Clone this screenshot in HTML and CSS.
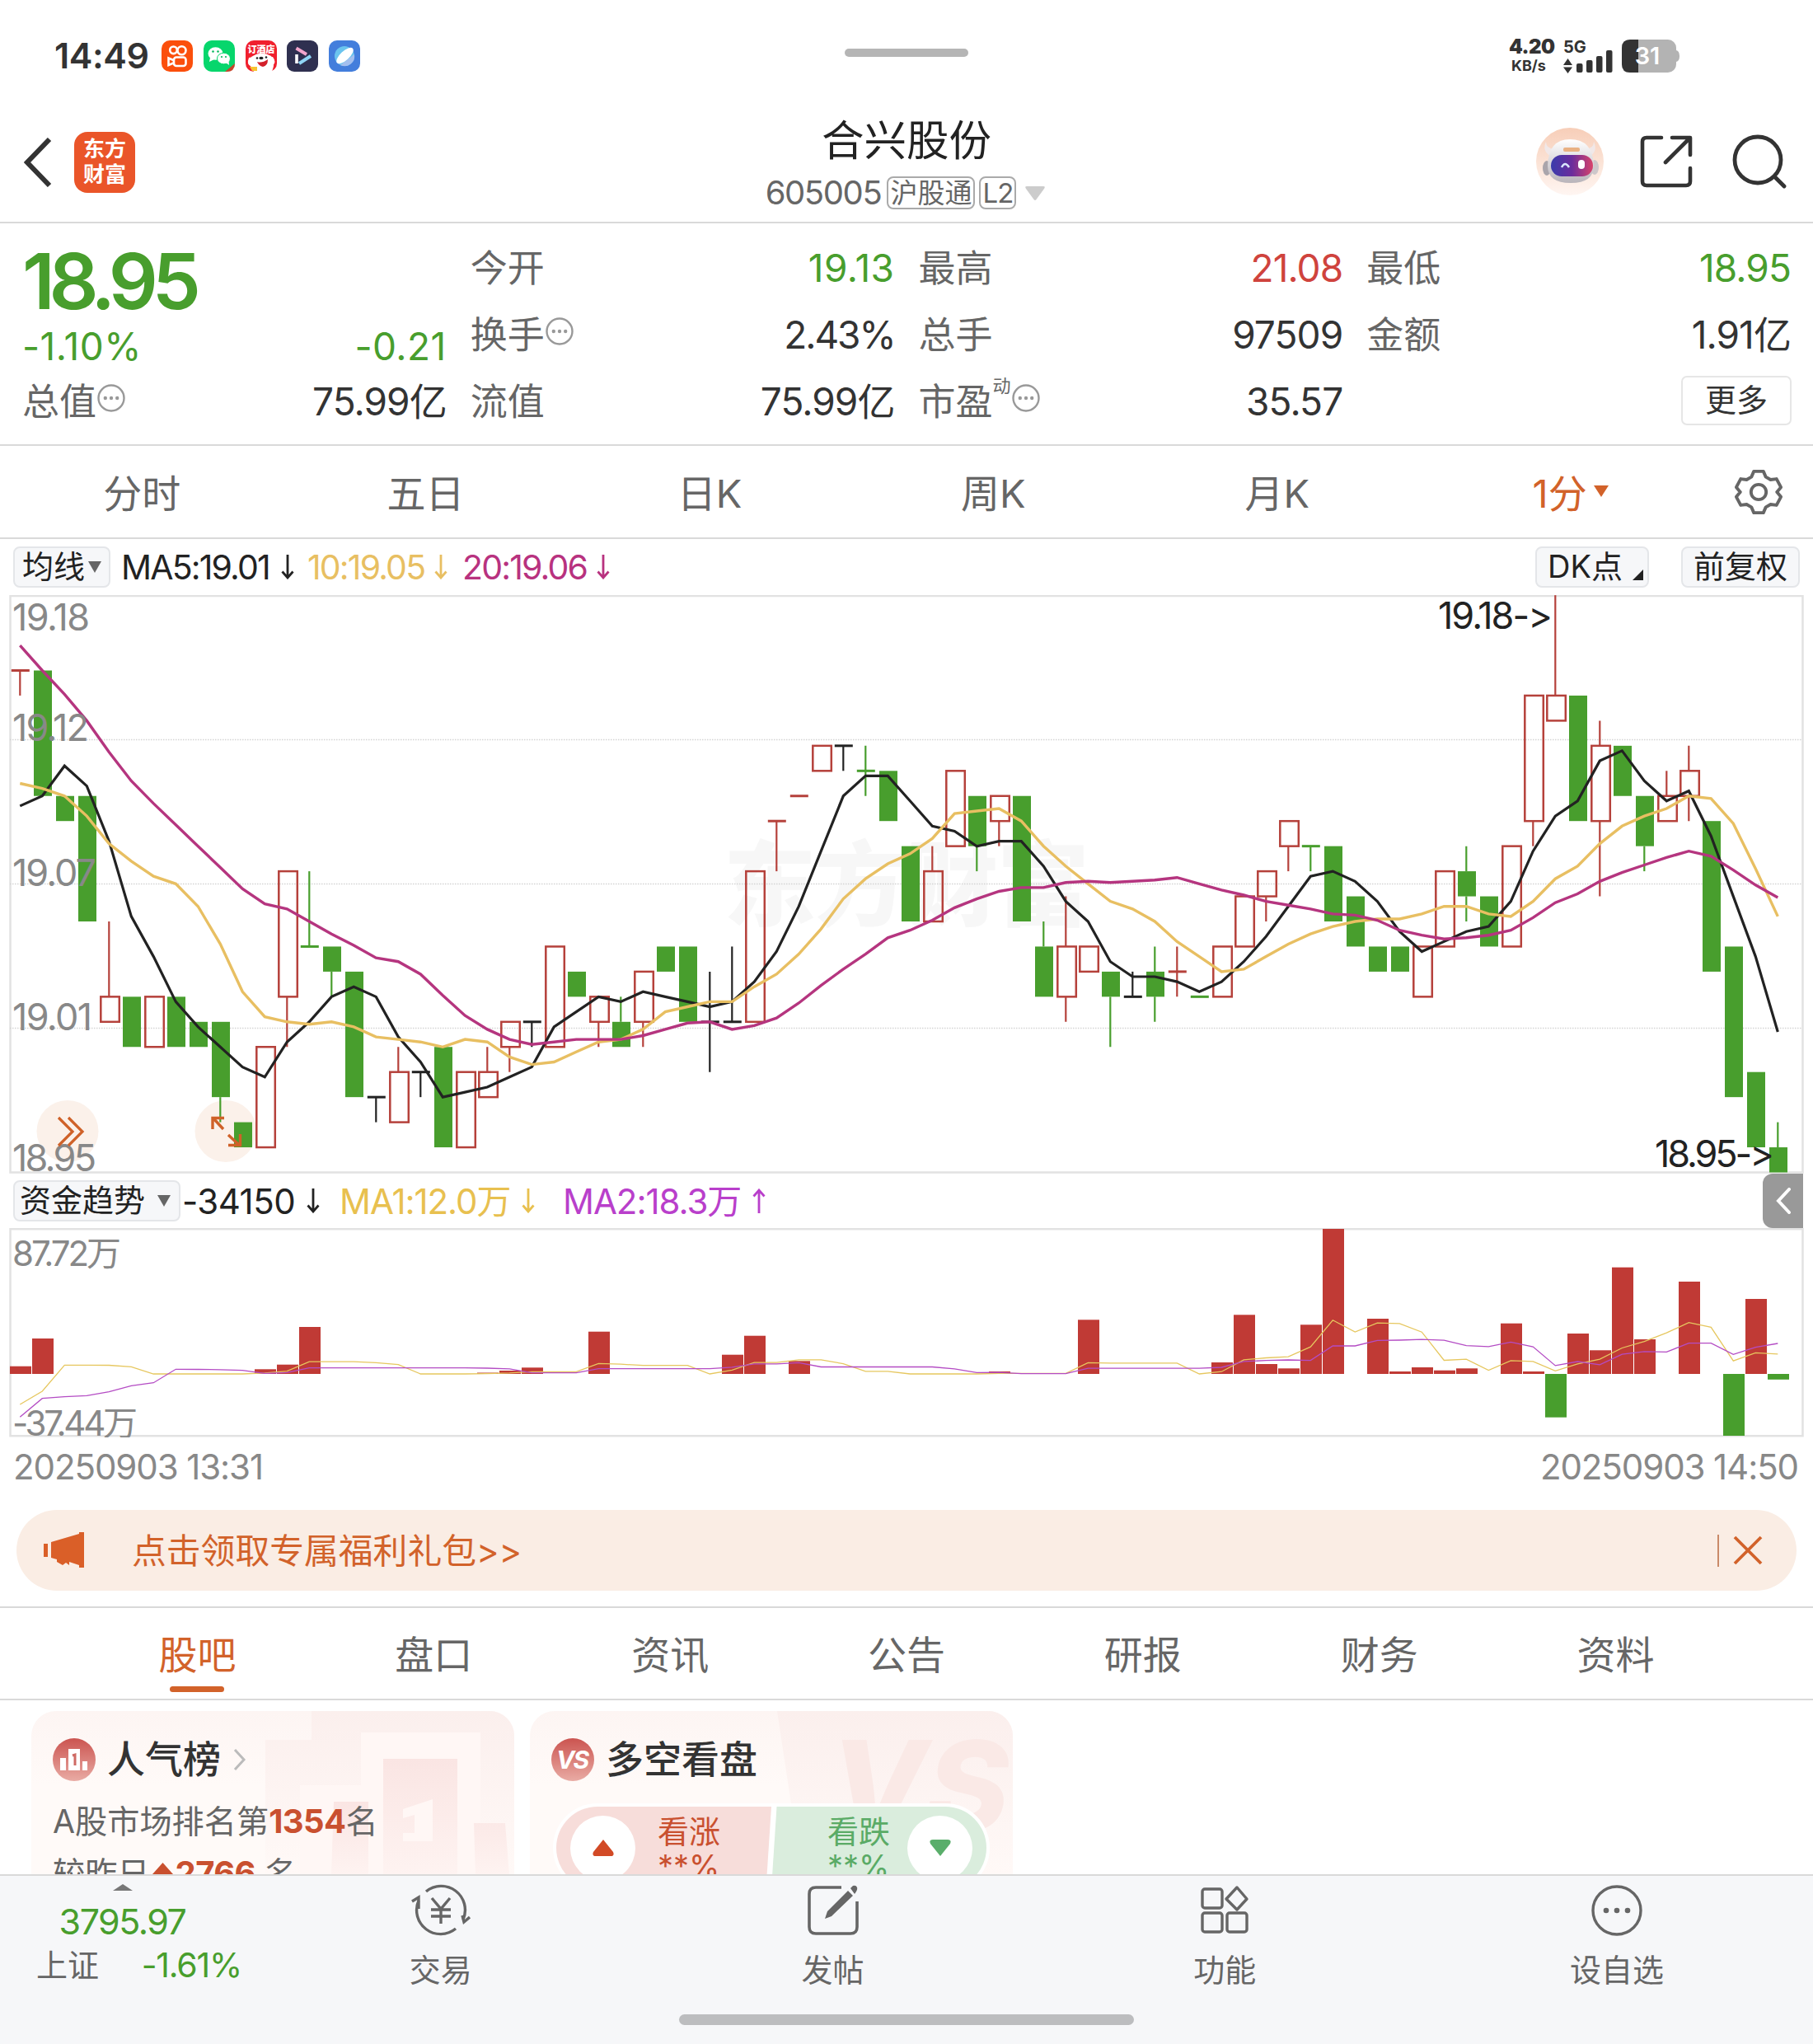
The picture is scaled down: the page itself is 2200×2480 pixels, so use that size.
FILE: index.html
```
<!DOCTYPE html>
<html lang="zh-CN">
<head>
    <meta charset="UTF-8">
    <meta name="viewport" content="width=device-width, initial-scale=1.0">
    <title>合兴股份 605005</title>
    <link rel="stylesheet" href="styles.css">
</head>
<body>

<!-- arrows used by the indicator legends -->
<svg class="defs" width="0" height="0">
    <symbol id="arrow-down" viewBox="0 0 16 30"><path d="M8 0V28M1.5 20.5L8 28L14.500 20.500" fill="none" stroke="currentColor" stroke-width="2.800"/></symbol>
    <symbol id="arrow-up" viewBox="0 0 16 30"><path d="M8 30V2M1.5 9.500L8 2L14.500 9.500" fill="none" stroke="currentColor" stroke-width="2.800"/></symbol>
    <symbol id="dots" viewBox="0 0 34 34"><circle cx="17" cy="17" r="15.500" fill="none" stroke="#999" stroke-width="2.400"/><circle cx="9.800" cy="17" r="2.200" fill="#999"/><circle cx="17" cy="17" r="2.200" fill="#999"/><circle cx="24.200" cy="17" r="2.200" fill="#999"/></symbol>
</svg>

<div class="status-bar">
    <span class="clock">14:49</span>
    <div class="app-icons">
        <svg viewBox="0 0 38 38"><rect width="38" height="38" rx="10" fill="#fb4f0c"/><g fill="none" stroke="#fff" stroke-width="2.600"><circle cx="14.500" cy="11.800" r="4.300"/><circle cx="24.500" cy="12.200" r="5"/><rect x="15" y="20.500" width="14.500" height="10.500" rx="3"/><path d="M14.500 24L8.500 21.500V30L14.500 27.500"/></g></svg>
        <svg viewBox="0 0 38 38"><rect width="38" height="38" rx="10" fill="#07d66c"/><path d="M38 28V28Q38 38 28 38H26Z" fill="#c8432b"/><ellipse cx="14.500" cy="16" rx="9" ry="7.800" fill="#fff"/><path d="M8 21L7 26L13 23Z" fill="#fff"/><ellipse cx="24.500" cy="22" rx="8" ry="6.800" fill="#fff" stroke="#07d66c"/><path d="M27 27L31 30L30.500 25Z" fill="#fff"/><g fill="#07b85c"><circle cx="11.500" cy="13.500" r="1.300"/><circle cx="17.500" cy="13.500" r="1.300"/><circle cx="22" cy="20" r="1.100"/><circle cx="27" cy="20" r="1.100"/></g></svg>
        <svg viewBox="0 0 38 38"><rect width="38" height="38" rx="10" fill="#f0202e"/><path d="M10 38Q2 28 7 20Q19 12 31 19Q37 26 32 38Z" fill="#fff"/><path d="M4 21Q1 29 6 31L10 20ZM33 20Q38 27 33 30L29 20Z" fill="#fff"/><circle cx="14" cy="21.500" r="1.300" fill="#222"/><circle cx="25" cy="20.500" r="1.300" fill="#222"/><ellipse cx="19" cy="21.500" rx="2.600" ry="1.700" fill="#222"/><path d="M14 26Q20 28 27 23Q27 31 21 32Q16 31 14 26Z" fill="#d3202a"/><path d="M5 32H14V37H8Z" fill="#f8c330"/><text x="19" y="15" text-anchor="middle" class="mini-ad">订酒店</text></svg>
        <svg viewBox="0 0 38 38"><rect width="38" height="38" rx="9" fill="#2f3050"/><path d="M12 17V28" stroke="#fff" stroke-width="3.600"/><path d="M11.500 9.500L24 17" stroke="#f3a5cc" stroke-width="4"/><path d="M29 19L15 28" stroke="#8fd5f5" stroke-width="4"/></svg>
        <svg viewBox="0 0 38 38"><rect width="38" height="38" rx="10" fill="#437edc"/><circle cx="19" cy="19" r="12" fill="#6bc4ee"/><path d="M31 17A12 12 0 0 1 14 30Z" fill="#a3bfee"/><ellipse cx="19.500" cy="18.500" rx="5.500" ry="13" transform="rotate(47 19.500 18.500)" fill="#fff"/></svg>
    </div>
    <div class="drag-handle"></div>
    <div class="status-right">
        <div class="net-speed"><b>4.20</b><small>KB/s</small></div>
        <svg class="signal" viewBox="0 0 62 42">
            <text x="0" y="17" class="signal-type">5G</text>
            <path d="M0 32L5.500 24L11 32ZM0 34.500L5.500 42L11 34.500Z" fill="#333"/>
            <g fill="#333"><rect x="16" y="30" width="7.500" height="11" rx="2"/><rect x="28" y="26" width="7.500" height="15" rx="2"/><rect x="40" y="21" width="7.500" height="20" rx="2"/><rect x="52" y="14" width="7.500" height="27" rx="2"/></g>
        </svg>
        <svg class="battery" viewBox="0 0 70 40">
            <rect x="0" y="0" width="66" height="40" rx="10" fill="#b3b3b3"/><path d="M66 13Q70 14 70 20T66 27Z" fill="#b3b3b3"/>
            <path d="M20 0H10Q0 0 0 10V30Q0 40 10 40H20Z" fill="#333"/>
            <text x="31" y="30" text-anchor="middle" class="battery-text">31</text>
        </svg>
    </div>
</div>

<header class="title-bar">
    <div class="title-left">
        <svg class="back" viewBox="0 0 34 60"><path d="M31 2L4 30L31 58" fill="none" stroke="#333" stroke-width="6"/></svg>
        <div class="logo">东方<br>财富</div>
    </div>
    <div class="title-center">
        <h1>合兴股份</h1>
        <div class="stock-code"><span class="num">605005</span><span class="tag">沪股通</span><span class="tag tag-l2">L2</span><svg viewBox="0 0 24 17"><path d="M2 0H22Q25 0 23 3L13.500 16Q12 18 10.500 16L1 3Q-1 0 2 0Z" fill="#ccc"/></svg></div>
    </div>
    <div class="title-right">
        <svg class="robot" viewBox="0 0 82 82">
            <defs>
                <linearGradient id="robotBg" x1="0" y1="0" x2="0" y2="1"><stop offset="0" stop-color="#f7ceb8"/><stop offset="1" stop-color="#fff6f2"/></linearGradient>
                <linearGradient id="visor"><stop offset="0" stop-color="#3a3cac"/><stop offset=".5" stop-color="#6b2d9c"/><stop offset="1" stop-color="#d8436a"/></linearGradient>
                <linearGradient id="shell" x1="0" y1="0" x2="0" y2="1"><stop offset="0" stop-color="#fff"/><stop offset="1" stop-color="#b9b4ba"/></linearGradient>
            </defs>
            <circle cx="41" cy="41" r="41" fill="url(#robotBg)"/>
            <path d="M12 17Q7 28 17 34L22 26Q12 25 12 17ZM70 17Q75 28 66 34L60 26Q70 25 70 17Z" fill="#f1e8e8"/>
            <ellipse cx="13" cy="49" rx="5" ry="9" fill="#aaa5ab"/><ellipse cx="71" cy="48" rx="5" ry="9" fill="#cdc7ca"/>
            <path d="M14 46Q15 14 41 14Q69 14 70 46Q70 67 42 67Q14 67 14 46Z" fill="url(#shell)"/>
            <rect x="33" y="24" width="20" height="5" rx="2" fill="#e9b183"/>
            <rect x="18" y="33" width="51" height="26" rx="13" fill="url(#visor)"/>
            <path d="M31 48Q35 40 40 48" fill="none" stroke="#d9e6ff" stroke-width="2.500"/><rect x="51" y="39" width="8" height="11" rx="4" fill="#fff"/>
        </svg>
        <svg class="share" viewBox="0 0 64 64"><path d="M26 3H8Q3 3 3 8V56Q3 61 8 61H56Q61 61 61 56V40M39 3H61V24M60 4L31 33" fill="none" stroke="#333" stroke-width="4.600" stroke-linecap="round" stroke-linejoin="round"/></svg>
        <svg class="search" viewBox="0 0 66 66"><circle cx="31" cy="31" r="28" fill="none" stroke="#333" stroke-width="4.800"/><path d="M51 51L63 63" stroke="#333" stroke-width="4.800" stroke-linecap="round"/></svg>
    </div>
</header>

<section class="quote">
    <div class="quote-col main-col">
        <div class="price">18.95</div>
        <div class="cell change green"><span class="num wide">-1.10%</span><span class="num wide">-0.21</span></div>
        <div class="cell"><label>总值<svg><use href="#dots"/></svg></label><span class="num">75.99亿</span></div>
    </div>
    <div class="quote-col">
        <div class="cell"><label>今开</label><span class="num wide green">19.13</span></div>
        <div class="cell"><label>换手<svg><use href="#dots"/></svg></label><span class="num tight">2.43%</span></div>
        <div class="cell"><label>流值</label><span class="num">75.99亿</span></div>
    </div>
    <div class="quote-col">
        <div class="cell"><label>最高</label><span class="num red">21.08</span></div>
        <div class="cell"><label>总手</label><span class="num">97509</span></div>
        <div class="cell"><label>市盈<sup>动</sup><svg><use href="#dots"/></svg></label><span class="num">35.57</span></div>
    </div>
    <div class="quote-col">
        <div class="cell"><label>最低</label><span class="num green">18.95</span></div>
        <div class="cell"><label>金额</label><span class="num">1.91亿</span></div>
        <div class="cell cell-more"><span class="more">更多</span></div>
    </div>
</section>

<nav class="period-tabs">
    <span>分时</span>
    <span>五日</span>
    <span>日K</span>
    <span>周K</span>
    <span>月K</span>
    <span class="active">1分<svg viewBox="0 0 18 14"><path d="M0 0H18L9 14Z" fill="currentColor"/></svg></span>
    <svg class="gear" viewBox="0 0 60 60"><g fill="none" stroke="#666" stroke-width="4" stroke-linejoin="round"><path d="M24 4H36L39 11L45 14.500L52.500 13.500L58 24L53 30L58 36L52.500 46.500L45 45.500L39 49L36 56H24L21 49L15 45.500L7.500 46.500L2 36L7 30L2 24L7.500 13.500L15 14.500L21 11Z"/><circle cx="30" cy="30" r="9.500"/></g></svg>
</nav>

<section class="legend">
    <span class="btn btn-ma">均线<svg viewBox="0 0 16 14"><path d="M0 0H16L8 14Z" fill="#666"/></svg></span>
    <span class="ma ma5"><i>MA5:19.01</i><svg><use href="#arrow-down"/></svg></span>
    <span class="ma ma10"><i>10:19.05</i><svg><use href="#arrow-down"/></svg></span>
    <span class="ma ma20"><i>20:19.06</i><svg><use href="#arrow-down"/></svg></span>
    <span class="btn btn-dk">DK点<svg viewBox="0 0 13 13"><path d="M13 0V13H0Z" fill="#222"/></svg></span>
    <span class="btn btn-fq">前复权</span>
</section>

<svg id="price-chart" class="chart" viewBox="0 0 2200 702" width="2200" height="702"></svg>

<section class="legend legend-flow">
    <span class="btn btn-flow">资金趋势<svg viewBox="0 0 16 14"><path d="M0 0H16L8 14Z" fill="#666"/></svg></span>
    <span class="ma flow-now"><i>-34150</i><svg><use href="#arrow-down"/></svg></span>
    <span class="ma flow-ma1"><i>MA1:12.0万</i><svg><use href="#arrow-down"/></svg></span>
    <span class="ma flow-ma2"><i>MA2:18.3万</i><svg><use href="#arrow-up"/></svg></span>
    <span class="side-toggle"><svg viewBox="0 0 18 32"><path d="M16 2L3 16L16 30" fill="none" stroke="#fff" stroke-width="4" stroke-linecap="round"/></svg></span>
</section>

<svg id="flow-chart" class="chart" viewBox="0 0 2200 254" width="2200" height="254"></svg>

<div class="dates"><span>20250903 13:31</span><span>20250903 14:50</span></div>

<div class="banner">
    <svg class="horn" viewBox="0 0 50 44"><path d="M0 14H5V30H0ZM9 12L43 2V0H49V43H43V40L31 36V40L27 37L23 40L16 36V33L9 31Z" fill="#da5f28"/></svg>
    <span class="banner-text">点击领取专属福利礼包&gt;&gt;</span>
    <span class="banner-line"></span>
    <svg class="banner-close" viewBox="0 0 36 36"><path d="M2 2L34 34M34 2L2 34" stroke="#d2622a" stroke-width="3.800"/></svg>
</div>

<nav class="info-tabs">
    <span class="active">股吧</span>
    <span>盘口</span>
    <span>资讯</span>
    <span>公告</span>
    <span>研报</span>
    <span>财务</span>
    <span>资料</span>
</nav>

<section class="cards">
    <div class="card">
        <svg class="card-art" viewBox="0 0 586 199">
            <defs>
                <linearGradient id="fade" x1="0" y1="0" x2="0" y2="1"><stop offset="0" stop-color="#fbefed"/><stop offset="1" stop-color="#fff9f7"/></linearGradient>
                <linearGradient id="bar" x1="0" y1="0" x2="0" y2="1"><stop offset="0" stop-color="#fae5e3"/><stop offset="1" stop-color="#fef3f1"/></linearGradient>
            </defs>
            <path d="M340 0H586V199H284V35H340Z" fill="url(#fade)"/>
            <path d="M400 26H545V199H326V90H400Z" fill="#fff7f5"/>
            <path d="M427 58H517V199H427Z" fill="url(#bar)"/>
            <path d="M367 110H409V199H364ZM537 136H575L580 199H539Z" fill="url(#bar)"/>
            <path d="M451 119L487 107V158H451V148H465V126L451 130Z" fill="#fff7f5"/>
        </svg>
        <div class="card-title">
            <svg class="badge" viewBox="0 0 52 52"><defs><linearGradient id="badge" x1="0" y1="0" x2="0" y2="1"><stop offset="0" stop-color="#cb5450"/><stop offset="1" stop-color="#e9aba4"/></linearGradient></defs><circle cx="26" cy="26" r="26" fill="url(#badge)"/><path d="M9 24H16V39H9ZM19 13H33V39H19ZM36 28H42V39H36Z" fill="#fff"/><path d="M24 21L27 20V33" fill="none" stroke="#cf6a64" stroke-width="3"/></svg>
            <h2>人气榜</h2>
            <svg class="chevron" viewBox="0 0 16 26"><path d="M2 1L13 13L2 25" fill="none" stroke="#bbb" stroke-width="3"/></svg>
        </div>
        <p>A股市场排名第<b>1354</b>名</p>
        <p>较昨日<svg class="up" viewBox="0 0 25 20"><path d="M12.500 0L25 14V16Q25 20 19 20H6Q0 20 0 16V14Z" fill="#c9502f"/></svg><b>2766</b> 名</p>
    </div>
    <div class="card">
        <svg class="card-art" viewBox="0 0 586 199">
            <path d="M300 0H586V199H330Z" fill="url(#fade)"/>
            <text x="364" y="146" class="art-vs">VS</text>
        </svg>
        <div class="card-title">
            <svg class="badge" viewBox="0 0 52 52"><circle cx="26" cy="26" r="26" fill="url(#badge)"/><text x="25" y="37" text-anchor="middle" class="badge-vs">VS</text></svg>
            <h2>多空看盘</h2>
        </div>
        <div class="vote">
            <div class="vote-side vote-up">
                <span class="knob"><svg viewBox="0 0 26 20"><path d="M13 0L25 15Q27 20 22 20H4Q-1 20 1 15Z" fill="#d24a26"/></svg></span>
                <span class="vote-label">看涨<br>**%</span>
            </div>
            <div class="vote-side vote-down">
                <span class="vote-label">看跌<br>**%</span>
                <span class="knob"><svg viewBox="0 0 26 20"><path d="M13 20L25 5Q27 0 22 0H4Q-1 0 1 5Z" fill="#5aae6b"/></svg></span>
            </div>
        </div>
    </div>
</section>

<footer class="bottom-nav">
    <div class="nav-row">
        <div class="index">
            <svg class="index-up" viewBox="0 0 24 8"><path d="M0 8L12 0L24 8Z" fill="#777"/></svg>
            <span class="num green index-value">3795.97</span>
            <div class="index-line"><span>上证</span><span class="num green">-1.61%</span></div>
        </div>
        <div class="nav-item">
            <svg viewBox="0 0 72 64"><g fill="none" stroke="#666" stroke-width="3.400"><path d="M18 9A29 29 0 0 1 63 43M54 54A29 29 0 0 1 9 20"/><path d="M1 21L9 16V30M71 40L64 46L62 38"/><path d="M25 17L36 30L47 17M36 30V48M24 31H48M24 39H48"/></g></svg>
            <span>交易</span>
        </div>
        <div class="nav-item">
            <svg viewBox="0 0 72 64"><path d="M46 4H15Q7 4 7 12V52Q7 60 15 60H57Q65 60 65 52V21" fill="none" stroke="#666" stroke-width="3.600"/><path d="M26 42L29 33L54 8L60 14L34 39ZM57 5L60 2Q64 1 65 4Q66 7 62 12Z" fill="#666"/></svg>
            <span>发帖</span>
        </div>
        <div class="nav-item">
            <svg viewBox="0 0 72 64"><g fill="none" stroke="#666" stroke-width="3.400" stroke-linejoin="round"><rect x="9" y="6" width="24" height="23" rx="3"/><rect x="9" y="35" width="24" height="23" rx="3"/><rect x="39" y="35" width="24" height="23" rx="3"/><path d="M51 4L63 18L51 31L38 18Z"/></g></svg>
            <span>功能</span>
        </div>
        <div class="nav-item">
            <svg viewBox="0 0 72 64"><circle cx="36" cy="32" r="29" fill="none" stroke="#666" stroke-width="3.400"/><g fill="#666"><circle cx="23" cy="32" r="3.300"/><circle cx="36" cy="32" r="3.300"/><circle cx="49" cy="32" r="3.300"/></g></svg>
            <span>设自选</span>
        </div>
    </div>
    <div class="home-bar"></div>
</footer>

<script src="chart.js"></script>
</body>
</html>
```
FILE: styles.css
```
* {
    box-sizing: border-box;
}
body {
    width: 2200px;
    height: 2480px;
    margin: 0;
    overflow: hidden;
    background: #fff;
    color: #333;
    font-family: Inter, "Noto Sans CJK SC", sans-serif;
    font-size: 46px;
    line-height: 1.2;
    font-feature-settings: "calt" 0; /* keep -> as two characters */
    display: flex;
    flex-direction: column;
}
svg {
    display: block;
    flex: none;
}
.defs {
    position: absolute;
}
.num {
    letter-spacing: -0.035em;
}
.green {
    color: #489e2d;
}
.red {
    color: #cf433d;
}

/* status bar */
.status-bar {
    height: 136px;
    display: flex;
    align-items: center;
    padding-left: 66px;
    position: relative;
    flex: none;
}
.clock {
    width: 130px;
    font-size: 43px;
    font-weight: 600;
    letter-spacing: -0.01em;
    white-space: nowrap;
}
.app-icons {
    display: flex;
    gap: 12.800px;
}
.app-icons svg {
    width: 38px;
    height: 38px;
}
.mini-ad {
    font-size: 11px;
    font-weight: 900;
    fill: #fff;
}
.drag-handle {
    position: absolute;
    left: 1025px;
    top: 59px;
    width: 150px;
    height: 10px;
    border-radius: 5px;
    background: #b5b5b5;
}
.status-right {
    margin-left: auto;
    margin-right: 162px;
    display: flex;
    align-items: center;
}
.net-speed {
    width: 66px;
    display: flex;
    flex-direction: column;
    font-weight: 700;
}
.net-speed b {
    font-size: 24px;
    line-height: 23px;
    letter-spacing: -0.020em;
}
.net-speed small {
    font-size: 18px;
    line-height: 24px;
    padding-left: 3px;
}
.signal {
    width: 62px;
    height: 42px;
    margin-right: 9px;
    overflow: visible;
}
.signal-type {
    font-size: 20px;
    font-weight: 700;
    fill: #333;
}
.battery {
    width: 70px;
    height: 40px;
}
.battery-text {
    font-size: 29px;
    font-weight: 600;
    fill: #fff;
}

/* title bar */
.title-bar {
    height: 135px;
    flex: none;
    display: grid;
    grid-template-columns: 1fr auto 1fr;
    border-bottom: 2px solid #d9d9d9;
}
.title-left {
    display: flex;
    align-items: center;
    padding: 0 0 12px 29px;
    gap: 27px;
}
.back {
    width: 34px;
    height: 60px;
}
.logo {
    width: 74px;
    height: 74px;
    border-radius: 16px;
    background: #ea5529;
    color: #fff;
    font-size: 26px;
    font-weight: 700;
    line-height: 31px;
    text-align: center;
    padding-top: 5px;
}
.title-center {
    display: flex;
    flex-direction: column;
    align-items: center;
}
h1 {
    margin: 4px 0 0;
    font-size: 51.500px;
    font-weight: 400;
    line-height: 60px;
    color: #222;
}
.stock-code {
    display: flex;
    align-items: center;
    height: 68px;
    margin-left: -3px;
    font-size: 40px;
    color: #666;
}
.stock-code .num {
    margin-right: 7px;
}
.tag {
    height: 40px;
    width: 107px;
    border: 2px solid #aaa;
    border-radius: 8px;
    font-size: 33px;
    line-height: 36px;
    text-align: center;
    margin-right: 5px;
}
.tag-l2 {
    width: 45px;
    letter-spacing: -1px;
    margin-right: 11px;
}
.stock-code svg {
    width: 24px;
    height: 17px;
}
.title-right {
    display: flex;
    align-items: center;
    justify-content: flex-end;
    padding: 0 32px 13px 0;
}
.robot {
    width: 82px;
    height: 82px;
    margin-right: 44px;
}
.share {
    width: 64px;
    height: 64px;
    margin-right: 48px;
}
.search {
    width: 66px;
    height: 66px;
}

/* quote */
.quote {
    height: 270px;
    flex: none;
    display: grid;
    grid-template-columns: repeat(4, 1fr);
    column-gap: 29px;
    padding: 14px 27px 0 27px;
    border-bottom: 2px solid #d9d9d9;
}
.quote-col {
    display: flex;
    flex-direction: column;
}
.cell {
    height: 81px;
    display: flex;
    align-items: center;
    justify-content: space-between;
    font-size: 46px;
    white-space: nowrap;
}
.cell .num {
    letter-spacing: -0.020em;
}
.cell .wide {
    letter-spacing: 0.010em;
}
.cell .tight {
    letter-spacing: -0.045em;
}
.cell label {
    color: #666;
    font-size: 45px;
    display: flex;
    align-items: center;
}
.cell label svg {
    width: 34px;
    height: 34px;
    margin: -9px 0 0 1px;
}
.cell sup {
    font-size: 22px;
    line-height: 24px;
    margin: -40px 0 0;
}
.price {
    height: 110px;
    font-size: 94px;
    font-weight: 600;
    line-height: 112px;
    letter-spacing: -0.078em;
    color: #489e2d;
}
.change {
    height: 52px;
}
.cell-more {
    justify-content: flex-end;
}
.more {
    width: 134px;
    height: 60px;
    border: 2px solid #e6e6e6;
    border-radius: 7px;
    font-size: 38px;
    line-height: 55px;
    text-align: center;
    margin: -4px -1px 0 0;
}

/* k-line period tabs */
.period-tabs {
    height: 113px;
    flex: none;
    display: flex;
    align-items: center;
    border-bottom: 2px solid #d9d9d9;
    font-size: 47px;
    color: #666;
}
.period-tabs span {
    width: 344.400px;
    display: flex;
    align-items: center;
    justify-content: center;
    padding-top: 6px;
}
.period-tabs .active {
    color: #d2622a;
    padding-left: 23px;
}
.period-tabs .active svg {
    width: 18px;
    height: 14px;
    margin-left: 8px;
    margin-top: -6px;
}
.gear {
    width: 58px;
    height: 58px;
    margin-left: 39px;
}

/* indicator legends */
.legend {
    height: 68px;
    flex: none;
    display: flex;
    align-items: center;
    padding: 0 16px;
    position: relative;
    font-size: 41px;
    color: #222;
}
.btn {
    height: 50px;
    display: flex;
    align-items: center;
    justify-content: center;
    background: #f6f7f9;
    border: 2px solid #e4e6e9;
    border-radius: 8px;
    font-size: 38px;
    white-space: nowrap;
}
.btn-ma {
    width: 118px;
    margin-right: 13px;
}
.btn svg {
    width: 16px;
    height: 16px;
    margin-left: 4px;
}
.ma {
    display: flex;
    align-items: center;
    white-space: nowrap;
}
.ma i {
    font-style: normal;
    letter-spacing: -0.045em;
    padding-top: 2px;
}
.ma svg {
    width: 16px;
    height: 30px;
    margin-left: 14px;
}
.ma5 {
    width: 226px;
}
.ma10 {
    width: 188px;
    color: #e8bf62;
}
.ma10 svg, .ma20 svg {
    margin-left: 12px;
}
.ma20 {
    color: #b8327f;
}
.btn-dk {
    width: 138px;
    margin-left: auto;
    margin-right: 39px;
}
.btn-dk svg {
    width: 13px;
    height: 13px;
    margin: 18px -8px 0 12px;
}
.btn-fq {
    width: 144px;
}
.legend-flow {
    height: 66px;
}
.legend-flow i {
    font-size: 42px;
    letter-spacing: -0.025em;
}
.btn-flow {
    width: 203px;
    padding-right: 4px;
    margin-right: 2px;
}
.btn-flow svg {
    margin-left: 15px;
}
.flow-now {
    width: 191px;
}
.flow-now i {
    letter-spacing: -0.012em;
}
.flow-ma1 {
    width: 271px;
    color: #e8c04f;
}
.flow-ma2 {
    color: #b93fcb;
}
.side-toggle {
    position: absolute;
    right: 12px;
    top: 0;
    width: 49px;
    height: 66px;
    border-radius: 12px 0 0 12px;
    background: #999;
    display: flex;
    align-items: center;
    justify-content: center;
}
.side-toggle svg {
    width: 18px;
    height: 32px;
}

/* charts */
.chart text {
    font-size: 45px;
}
.chart .axis {
    fill: #888;
}
.chart .mark {
    fill: #222;
}
.chart .flow-axis {
    font-size: 42px;
    fill: #888;
}
.chart .watermark {
    font-size: 112px;
    font-weight: 900;
    fill: #f7f7f7;
}
.dates {
    height: 88px;
    flex: none;
    display: flex;
    justify-content: space-between;
    padding: 9px 18px 0 16px;
    font-size: 42px;
    letter-spacing: -0.026em;
    color: #888;
    line-height: 54px;
}

/* gift banner */
.banner {
    height: 98px;
    flex: none;
    margin: 0 20px 19px;
    border-radius: 49px;
    background: #faede4;
    color: #d2622a;
    font-size: 41.800px;
    display: flex;
    align-items: center;
    padding: 0 41px 0 33px;
}
.horn {
    width: 50px;
    height: 44px;
}
.banner-text {
    margin-left: 57px;
    padding-top: 3px;
    flex: 1;
}
.banner-line {
    width: 2px;
    height: 39px;
    background: #c98a68;
    margin-right: 17px;
}
.banner-close {
    width: 36px;
    height: 36px;
}

/* info tabs */
.info-tabs {
    height: 114px;
    flex: none;
    display: flex;
    padding: 0 96px;
    border-top: 2px solid #d9d9d9;
    border-bottom: 2px solid #d9d9d9;
    font-size: 47px;
    color: #666;
}
.info-tabs span {
    flex: 1;
    display: flex;
    flex-direction: column;
    align-items: center;
    line-height: 60px;
    padding-top: 27px;
}
.info-tabs .active {
    color: #d2622a;
}
.info-tabs .active::after {
    content: "";
    width: 66px;
    height: 7px;
    margin-top: 8px;
    border-radius: 4px;
    background: #d2622a;
}

/* cards */
.cards {
    height: 211px;
    flex: none;
    display: flex;
    gap: 19px;
    padding: 13px 38px 0;
    overflow: hidden;
}
.card {
    width: 586px;
    height: 260px;
    border-radius: 30px;
    background: linear-gradient(#fdf5f3, #fffaf8 90px);
    padding: 27px 26px;
    position: relative;
    overflow: hidden;
}
.card-art {
    position: absolute;
    left: 0;
    top: 0;
    width: 586px;
    height: 199px;
}
.art-vs {
    font-size: 152px;
    font-weight: 800;
    font-style: italic;
    fill: #fae9e6;
}
.card-title {
    display: flex;
    align-items: center;
    height: 64px;
    position: relative;
}
.badge {
    width: 52px;
    height: 52px;
}
.badge-vs {
    font-size: 30px;
    font-weight: 700;
    font-style: italic;
    letter-spacing: -2px;
    fill: #fff;
}
h2 {
    margin: 0 0 0 14px;
    font-size: 46px;
    font-weight: 500;
}
.chevron {
    width: 16px;
    height: 26px;
    margin-left: 15px;
}
.card p {
    margin: 0;
    position: relative;
    display: flex;
    align-items: center;
    height: 63px;
    padding-top: 23px;
    font-size: 39.200px;
    color: #666;
    white-space: pre;
}
.card p + p {
    padding-top: 22px;
}
.card p b {
    color: #c9502f;
    font-size: 40px;
    font-weight: 700;
    letter-spacing: -0.015em;
}
.up {
    width: 25px;
    height: 20px;
    margin: -6px 3px 0;
}
.vote {
    position: relative;
    margin: 21px 0 0 2px;
    width: 530px;
    height: 108px;
    padding: 4px;
    border-radius: 54px;
    background: #fff;
    display: flex;
}
.vote-side {
    display: flex;
    align-items: center;
    width: 264px;
    height: 100px;
}
.vote-up {
    background: #f7ddda;
    border-radius: 50px 0 0 50px;
    clip-path: polygon(0 0, 100% 0, 97.500% 100%, 0 100%);
    padding-left: 17px;
    color: #c9502f;
}
.vote-down {
    background: #daeddd;
    border-radius: 0 50px 50px 0;
    clip-path: polygon(2.500% 0, 100% 0, 100% 100%, 0 100%);
    justify-content: flex-end;
    padding-right: 17px;
    color: #5aab66;
}
.knob {
    width: 79px;
    height: 79px;
    border-radius: 50%;
    background: #fff;
    display: flex;
    align-items: center;
    justify-content: center;
}
.knob svg {
    width: 26px;
    height: 20px;
}
.vote-label {
    font-size: 38px;
    line-height: 42px;
    padding-top: 1px;
    margin: 0 27px;
}
.vote-down .vote-label {
    margin: 0 21px;
}

/* bottom nav */
.bottom-nav {
    height: 206px;
    flex: none;
    background: #f6f7f9;
    border-top: 2px solid #d9d9d9;
    position: relative;
    z-index: 1;
}
.nav-row {
    display: flex;
    height: 168px;
}
.index {
    width: 297px;
    display: flex;
    flex-direction: column;
    align-items: center;
}
.index-up {
    width: 24px;
    height: 8px;
    margin-top: 10px;
}
.index-value {
    font-size: 43px;
    line-height: 52px;
    margin-top: 11px;
}
.index-line {
    width: 297px;
    display: flex;
    justify-content: space-between;
    padding: 0 4px 0 44px;
    font-size: 38px;
    line-height: 54px;
    color: #666;
}
.index-line .num {
    font-size: 41px;
    letter-spacing: -0.030em;
}
.nav-item {
    flex: 1;
    display: flex;
    flex-direction: column;
    align-items: center;
    font-size: 38px;
    color: #666;
    padding-top: 10px;
}
.nav-item svg {
    width: 72px;
    height: 64px;
}
.nav-item span {
    line-height: 50px;
    margin-top: 15px;
}
.home-bar {
    width: 552px;
    height: 13px;
    border-radius: 7px;
    background: #bcbdbf;
    margin: 0 auto;
}
```
FILE: chart.js
```
// candles: [open, close, high, low] in cents above 18.95, optional colour for flat ones
const candles = [
    [20, 20, 20, 19, 'r'], [20, 15, 20, 15], [15, 14, 15, 14], [15, 10, 15, 10], [6, 7, 10, 6],
    [7, 5, 7, 5], [5, 7, 7, 5], [7, 5, 7, 5], [6, 5, 6, 5], [6, 3, 6, 2],
    [2, 1, 2, 1], [1, 5, 5, 1], [7, 12, 12, 5], [9, 9, 12, 9, 'g'], [9, 8, 9, 7],
    [8, 3, 8, 3], [3, 3, 3, 2, 'k'], [2, 4, 5, 2], [4, 4, 4, 3, 'k'], [5, 1, 5, 1],
    [1, 4, 4, 1], [3, 4, 5, 3], [5, 6, 6, 4], [6, 6, 6, 5, 'k'], [5, 9, 9, 5],
    [8, 7, 8, 7], [6, 7, 7, 5], [6, 5, 7, 5], [6, 8, 8, 5], [9, 8, 9, 8],
    [9, 6, 9, 6], [6, 6, 8, 4, 'k'], [6, 6, 9, 6, 'k'], [6, 12, 12, 6], [14, 14, 14, 12, 'r'],
    [15, 15, 15, 15, 'r'], [16, 17, 17, 16], [17, 17, 17, 16, 'k'], [16, 16, 17, 15, 'g'], [16, 14, 16, 14],
    [13, 10, 13, 10], [10, 12, 13, 10], [13, 16, 16, 13], [15, 13, 15, 12], [14, 15, 15, 13],
    [15, 10, 15, 10], [9, 7, 10, 7], [7, 9, 11, 6], [8, 9, 9, 8], [8, 7, 8, 5],
    [7, 7, 8, 7, 'k'], [8, 7, 9, 6], [8, 8, 9, 7, 'r'], [7, 7, 7, 7, 'g'], [7, 9, 9, 7],
    [9, 11, 11, 9], [11, 12, 12, 10], [13, 14, 14, 12], [13, 13, 13, 12, 'g'], [13, 10, 13, 10],
    [11, 9, 11, 9], [9, 8, 9, 8], [9, 8, 9, 8], [7, 9, 9, 7], [9, 12, 12, 9],
    [12, 11, 13, 10], [11, 9, 11, 9], [9, 13, 13, 9], [14, 19, 19, 13], [18, 19, 23, 18],
    [19, 14, 19, 14], [14, 17, 18, 11], [17, 15, 17, 15], [15, 13, 15, 12], [14, 15, 16, 14],
    [15, 16, 17, 14], [14, 8, 14, 8], [9, 3, 9, 3], [4, 1, 4, 1], [1, 0, 2, 0]
];

// fund flow per minute, index -> bar height
const flow = {
    0: 9.3, 1: 43, 11: 5.7, 12: 11.3, 13: 57, 21: 1.5, 22: 4, 23: 7.7, 26: 51.3, 32: 23.3, 33: 46.3, 35: 15.7,
    44: 3, 48: 65.7, 54: 14, 55: 71.7, 56: 12, 57: 6.7, 58: 59.7, 59: 176, 61: 67, 62: 3, 63: 8, 64: 4.3, 65: 6.7,
    67: 61.3, 68: 3, 69: -52.7, 70: 49, 71: 28.7, 72: 129.3, 73: 42, 75: 112, 77: -75, 78: 91, 79: -6.8
};

const colors = { r: '#b5413b', g: '#489e2d', k: '#222' };
const cx = i => 24.3 + 27 * i;
const py = k => 700.5 - 30.45 * k;

// moving average, the first values come from bars before the visible range
function average(data, n, start) {
    return data.map((v, i) => {
        if (i < start.length) return start[i];
        return data.slice(i - n + 1, i + 1).reduce((a, b) => a + b, 0) / n;
    });
}

function line(values, toY, color, width) {
    const points = values.map((v, i) => cx(i).toFixed(1) + ',' + toY(v).toFixed(1)).join(' ');
    return `<polyline points="${points}" fill="none" stroke="${color}" stroke-width="${width}"/>`;
}

function text(x, y, str, cls, width) {
    return `<text x="${x}" y="${y}" class="${cls}" textLength="${width}">${str}</text>`;
}

function drawPrice() {
    let s = '';
    s += '<rect x="12.500" y="1" width="2175" height="699.500" fill="none" stroke="#e2e2e2" stroke-width="2.500"/>';
    s += text(878, 393, '东方财富', 'watermark', 444);
    [175.5, 350.5, 525.5].forEach(y => {
        s += `<path d="M12 ${y}H2187" stroke="#d4d4d4" stroke-width="1.500" stroke-dasharray="1.500 1.500"/>`;
    });
    s += '<circle cx="82" cy="650.500" r="37.500" fill="#fbf1ea"/><circle cx="274" cy="650.500" r="37.500" fill="#fbf1ea"/>';

    candles.forEach(([o, c, h, l, flat], i) => {
        const x = cx(i);
        const color = colors[flat || (c > o ? 'r' : 'g')];
        const top = py(Math.max(o, c)), bottom = py(Math.min(o, c));
        s += `<path d="M${x} ${py(h)}V${top}M${x} ${bottom}V${py(l)}" stroke="${color}" stroke-width="2.200"/>`;
        if (flat) {
            s += `<path d="M${x - 10.5} ${top}H${x + 11.5}" stroke="${color}" stroke-width="3"/>`;
        } else if (c > o) {
            s += `<rect x="${x - 10}" y="${top}" width="22.500" height="${bottom - top}" fill="none" stroke="${color}" stroke-width="2.500"/>`;
        } else {
            s += `<rect x="${x - 10.3}" y="${top}" width="22" height="${bottom - top}" fill="${color}"/>`;
        }
    });

    const close = candles.map(c => c[1]);
    s += line(average(close, 5, [14.6, 15, 16.2, 15.4]), py, '#222', 3.2);
    s += line(average(close, 10, [15.5, 15.3, 15, 14.2, 13.1, 12.4, 11.8, 11.5, 10.6]), py, '#e8bf62', 3.4);
    s += line(average(close, 20, [21, 20, 19.05, 18, 16.75, 15.6, 14.7, 13.85, 13, 12.15, 11.3, 10.7, 10.5, 10, 9.5, 9.05, 8.55, 8.4, 7.9]), py, '#b5357f', 3.4);

    s += text(15, 43, '19.18', 'axis', 94);
    s += text(15, 177, '19.12', 'axis', 93);
    s += text(15, 353, '19.07', 'axis', 102);
    s += text(15, 528, '19.01', 'axis', 97);
    s += text(15, 699, '18.95', 'axis', 102);
    s += text(1745, 41, '19.18-&gt;', 'mark', 139);
    s += text(2008, 694, '18.95-&gt;', 'mark', 145);
    s += '<path d="M71 634L88 651L71 668M83 634L100 651L83 668" fill="none" stroke="#cf6128" stroke-width="3.200"/>';
    s += '<path d="M258 648V634.500H272M259 635L271 648M277 655L291 668M291.500 654V667.500H277" fill="none" stroke="#cf6128" stroke-width="3.400"/>';
    document.getElementById('price-chart').innerHTML = s;
}

function drawFlow() {
    const zero = 177;
    const fy = v => zero - v;
    const bars = candles.map((c, i) => flow[i] || 0);
    let s = '<rect x="12.500" y="1.200" width="2175" height="251" fill="none" stroke="#e2e2e2" stroke-width="2.500"/>';
    bars.forEach((v, i) => {
        if (!v) return;
        s += `<rect x="${12 + 27 * i}" y="${v > 0 ? zero - v : zero}" width="26" height="${Math.abs(v)}" fill="${v > 0 ? '#c03a35' : '#489e2d'}"/>`;
    });
    s += line(average(bars, 5, [-37, -21, 10.7, 10.7]), fy, '#e6c75f', 1.3);
    s += line(average(bars, 10, [-52.3, -29.7, -27.7, -26.3, -21.7, -14.3, -10.7, 5.7, 5.5]), fy, '#b44cc4', 1.3);
    s += text(15, 46, '87.72万', 'flow-axis', 132);
    s += text(15, 252, '-37.44万', 'flow-axis', 152);
    document.getElementById('flow-chart').innerHTML = s;
}

drawPrice();
drawFlow();
```
